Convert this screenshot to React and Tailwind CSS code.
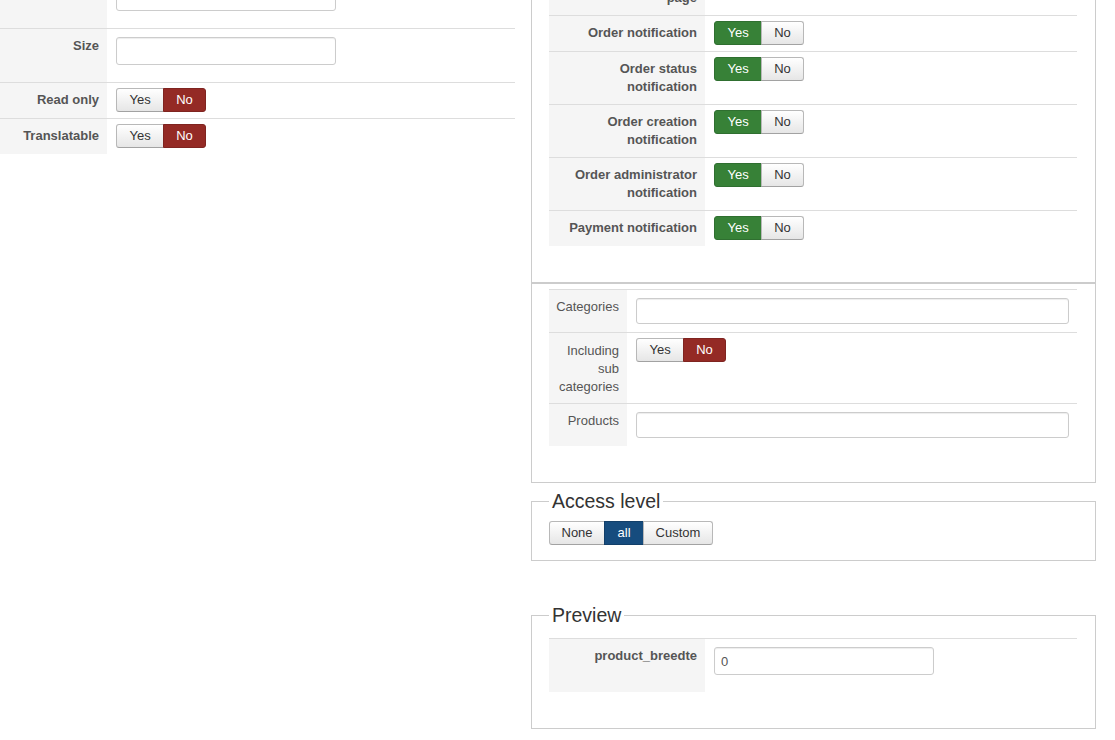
import React from 'react'

const leftRows = [
  { label: '', type: 'input' },
  { label: 'Size', type: 'input' },
  { label: 'Read only', type: 'toggle', value: 'no' },
  { label: 'Translatable', type: 'toggle', value: 'no' },
]

const notifyRows = [
  { label: 'Order confirmation page', type: 'blank' },
  { label: 'Order notification', type: 'toggle', value: 'yes' },
  { label: 'Order status notification', type: 'toggle', value: 'yes' },
  { label: 'Order creation notification', type: 'toggle', value: 'yes' },
  { label: 'Order administrator notification', type: 'toggle', value: 'yes' },
  { label: 'Payment notification', type: 'toggle', value: 'yes' },
]

const btnBase = 'h-[24px] px-[12px] text-[13px] leading-[22px] border'
const btnOff = 'bg-gradient-to-b from-white to-[#e6e6e6] border-[#b8b8b8] border-b-[#a2a2a2] text-[#333]'

function Toggle({ value }) {
  const yesOn = value === 'yes'
  return (
    <div className="flex">
      <button
        className={`${btnBase} !px-[12.5px] rounded-l-[3px] ${yesOn ? 'bg-[#378137] border-[#2f6f30] text-white' : btnOff}`}
      >
        Yes
      </button>
      <button
        className={`${btnBase} -ml-px rounded-r-[3px] ${!yesOn ? 'bg-[#942a25] border-[#7f2420] text-white' : btnOff}`}
      >
        No
      </button>
    </div>
  )
}

function TextInput({ className = '', value = '' }) {
  return (
    <input
      type="text"
      defaultValue={value}
      className={`block h-[28px] rounded-[3px] border border-[#ccc] bg-white px-[6px] text-[13px] text-[#555] shadow-[inset_0_1px_1px_rgba(0,0,0,0.075)] outline-none ${className}`}
    />
  )
}

// label cell + control cell, one table row
function Row({ label, type, value, labelW, bold = true }) {
  return (
    <div className="flex border-t border-[#ddd]">
      <div
        className={`${labelW} shrink-0 bg-[#f5f5f5] pt-[8px] pb-[8px] pl-[4px] pr-[8px] text-right text-[#555] ${bold ? 'font-bold' : ''}`}
      >
        {label}
      </div>
      <div className="flex-1 pl-[9px] pr-[8px]">
        {type === 'input' && (
          <div className="pt-[8px] pb-[17px]">
            <TextInput className="w-[220px]" />
          </div>
        )}
        {type === 'toggle' && (
          <div className="pt-[5px] pb-[6px]">
            <Toggle value={value} />
          </div>
        )}
      </div>
    </div>
  )
}

export default function App() {
  return (
    <div className="min-h-[740px] overflow-hidden bg-white font-['Liberation_Sans',Arial,sans-serif] text-[13px] leading-[18px] text-[#333]">
      <div className="flex gap-[16px]">
        {/* Left column - field settings */}
        <div className="w-[515px] shrink-0 -mt-[26px]">
          {leftRows.map((r, i) => (
            <Row key={i} {...r} labelW="w-[107px]" />
          ))}
        </div>

        {/* Right column */}
        <div className="w-[565px] shrink-0 -mt-[39px] flex flex-col">
          <div className="border border-[#ccc] pl-[17px] pr-[18px] pb-[36px]">
            {notifyRows.map((r, i) => (
              <Row key={i} {...r} labelW="w-[156px]" />
            ))}
          </div>

          <div className="border border-[#ccc] pl-[17px] pr-[18px] pt-[5px] pb-[36px]">
            <div className="flex border-t border-[#ddd]">
              <div className="w-[78px] shrink-0 bg-[#f5f5f5] pt-[8px] pr-[8px] text-right text-[#555]">Categories</div>
              <div className="flex-1 pl-[9px] pr-[8px] py-[8px]">
                <TextInput className="w-full !h-[26px]" />
              </div>
            </div>
            <div className="flex border-t border-[#ddd]">
              <div className="w-[78px] shrink-0 bg-[#f5f5f5] pt-[9px] pb-[7px] pl-[4px] pr-[8px] text-right text-[#555]">
                Including sub categories
              </div>
              <div className="flex-1 pl-[9px] pr-[8px] pt-[5px]">
                <Toggle value="no" />
              </div>
            </div>
            <div className="flex border-t border-[#ddd]">
              <div className="w-[78px] shrink-0 bg-[#f5f5f5] pt-[8px] pr-[8px] text-right text-[#555]">Products</div>
              <div className="flex-1 pl-[9px] pr-[8px] py-[8px]">
                <TextInput className="w-full !h-[26px]" />
              </div>
            </div>
          </div>

          <fieldset className="mt-[6px] border border-[#ccc] pl-[17px] pr-[18px] pt-[8px] pb-[15px]">
            <legend className="px-[3px] text-[19.5px] leading-[24px] text-[#333]">Access level</legend>
            <div className="flex">
              <button className={`${btnBase} !px-[11.5px] rounded-l-[3px] ${btnOff}`}>None</button>
              <button className={`${btnBase} -ml-px !px-[12.5px] bg-[#164c7e] border-[#123f69] text-white`}>all</button>
              <button className={`${btnBase} -ml-px !px-[11.5px] rounded-r-[3px] ${btnOff}`}>Custom</button>
            </div>
          </fieldset>

          <fieldset className="mt-[42px] border border-[#ccc] pl-[17px] pr-[18px] pt-[11px] pb-[36px]">
            <legend className="px-[3px] text-[19.5px] leading-[24px] text-[#333]">Preview</legend>
            <div className="flex border-t border-[#ddd]">
              <div className="w-[156px] shrink-0 bg-[#f5f5f5] pt-[8px] pr-[8px] text-right font-bold text-[#555]">
                product_breedte
              </div>
              <div className="flex-1 pl-[9px] pr-[8px] pt-[8px] pb-[17px]">
                <TextInput className="w-[220px]" value="0" />
              </div>
            </div>
          </fieldset>
        </div>
      </div>
    </div>
  )
}
